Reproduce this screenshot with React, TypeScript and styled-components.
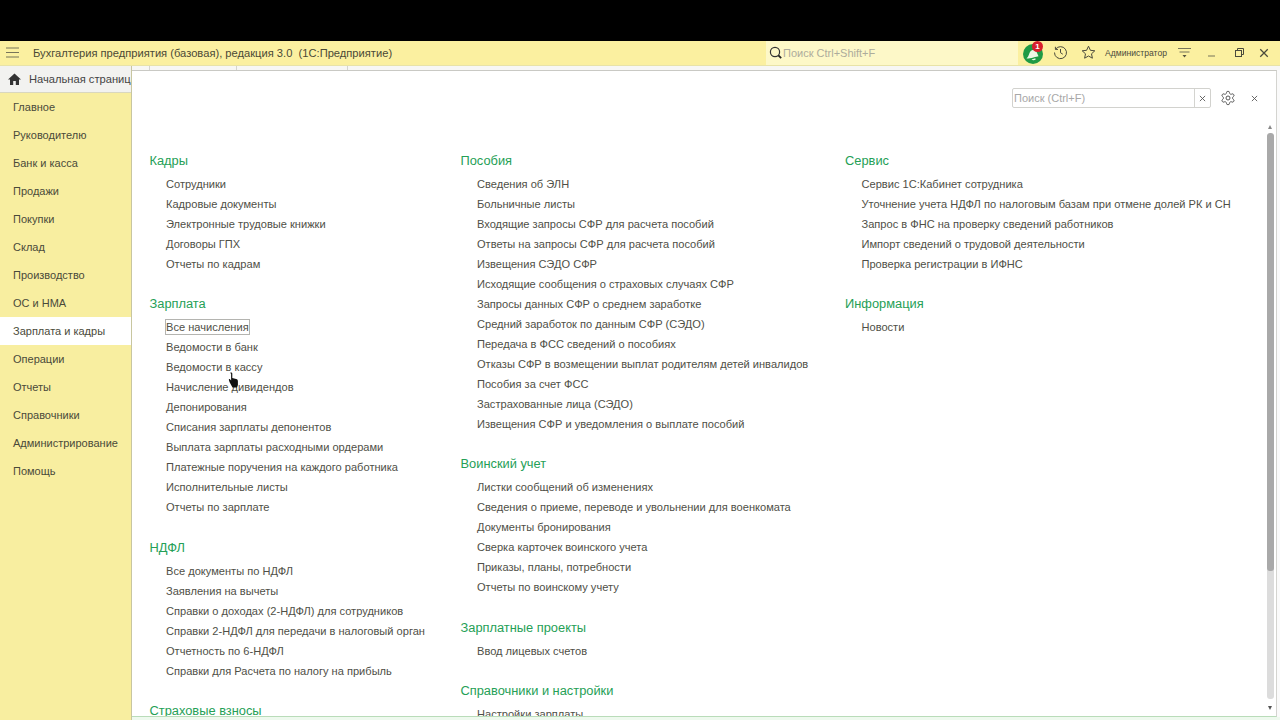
import React from "react";
import styled, { createGlobalStyle } from "styled-components";

const Global = createGlobalStyle`
  html, body { margin: 0; padding: 0; background: #000; }
  body { width: 1280px; height: 720px; overflow: hidden; font-family: "Liberation Sans", Arial, sans-serif; }
  * { box-sizing: border-box; }
`;
const Page = styled.div`width:1280px;height:720px;display:flex;flex-direction:column;overflow:hidden;background:#000;`;
const TopBlack = styled.div`height:41px;flex:none;background:#000;`;
const Header = styled.header`height:25px;flex:none;display:flex;align-items:center;background:#fbf0a0;padding-bottom:1px;border-bottom:1px solid #e8e3a8;`;
const Burger = styled.button`width:24px;height:24px;flex:none;margin-left:0;padding:0;border:0;background:none;display:flex;align-items:center;justify-content:center;`;
const AppTitle = styled.div`margin-left:9px;width:733px;flex:none;font-size:11.16px;color:#4a4936;white-space:pre;`;
const GlobalSearch = styled.div`width:252px;height:24px;flex:none;display:flex;align-items:center;background:#fdf8c8;font-size:11px;color:#adac9c;padding-left:2px;`;
const HeaderIcons = styled.div`flex:1;display:flex;align-items:center;height:100%;`;
const Slot = styled.div<{ $w: number }>`width:${p => p.$w}px;display:flex;align-items:center;justify-content:center;flex:none;color:#4a4a3c;`;
const UserName = styled.div`font-size:8.6px;color:#4a4a3c;width:72px;padding-left:1px;flex:none;white-space:nowrap;`;
const Badge = styled.span`position:absolute;left:14px;top:0px;width:11px;height:11px;border-radius:50%;background:#d81f2c;color:#fff;font-size:8px;font-weight:bold;line-height:11px;text-align:center;`;
const BellWrap = styled.div`position:relative;width:30px;height:24px;flex:none;display:flex;align-items:center;justify-content:center;padding-top:2px;`;
const Body = styled.div`flex:1;display:flex;min-height:0;background:#eef9ee;`;
const LeftCol = styled.div`width:132px;flex:none;display:flex;flex-direction:column;background:#f8eea0;border-right:1px solid #c8c6a0;`;
const HomeTab = styled.div`height:27px;flex:none;display:flex;align-items:center;background:#f2f2f0;border-bottom:1px solid #d9d7bf;font-size:11.16px;color:#444;overflow:hidden;white-space:nowrap;padding-left:8px;gap:8px;`;
const HomeIcon = styled.svg`flex:none;`;
const Nav = styled.nav`display:flex;flex-direction:column;flex:1;`;
const NavItem = styled.div<{ $active?: boolean }>`height:28px;flex:none;display:flex;align-items:center;padding-left:13px;font-size:11px;color:#4a4a3a;background:${p => (p.$active ? "#ffffff" : "transparent")};`;
const RightCol = styled.div`flex:1;display:flex;flex-direction:column;min-width:0;background:#fafafa;border-bottom:3px solid #eef9ee;`;
const TabStrip = styled.div`height:4px;flex:none;display:flex;background:#f7f7f5;`;
const TabStub = styled.div<{ $w: number }>`width:${p => p.$w}px;flex:none;border-right:1px solid #d4d4d0;`;
const Panel = styled.main`flex:1;margin-right:3px;min-height:0;background:#fff;border-top:1px solid #c9c9c4;border-right:1px solid #d4d4d0;border-bottom:1px solid #b9dcb9;position:relative;overflow:hidden;display:flex;flex-direction:column;`;
const PanelTools = styled.div`height:75px;flex:none;display:flex;justify-content:flex-end;align-items:flex-start;padding-top:17px;padding-right:18.5px;`;
const SearchBox = styled.div`width:199px;height:20px;flex:none;display:flex;border:1px solid #d2d2ce;border-radius:2px;background:#fff;font-size:11px;color:#a8a8a8;`;
const SearchInput = styled.div`flex:1;padding-left:1px;line-height:18px;`;
const SearchClear = styled.div`width:16px;border-left:1px solid #d4d4d0;display:flex;align-items:center;justify-content:center;`;
const ToolBtn = styled.div<{ $ml: number }>`margin-left:${p => p.$ml}px;height:20px;display:flex;align-items:center;justify-content:center;flex:none;`;
const Columns = styled.div`display:flex;flex:1;min-height:0;overflow:hidden;padding-left:17.5px;`;
const Col = styled.div<{ $w: number }>`width:${p => p.$w}px;flex:none;`;
const Section = styled.section`margin-bottom:15.3px;`;
const SecTitle = styled.div`height:28px;line-height:29px;font-size:12.85px;color:#25a056;white-space:nowrap;`;
const Item = styled.div`height:20px;display:flex;align-items:center;padding-left:16.5px;white-space:nowrap;font-size:11.08px;color:#4f4f47;`;
const ItemText = styled.span<{ $focus?: boolean }>`${p => (p.$focus ? "outline:1px solid #b4b4b0;outline-offset:0;padding:1px 0;" : "")}`;
const Track = styled.div`position:absolute;top:62px;right:2.5px;width:7px;height:566px;background:#dcdcdc;border-radius:3px;overflow:hidden;`;
const Thumb = styled.div`height:438px;background:#a9a9a9;border-radius:3px;`;
const ArrowUp = styled.div`position:absolute;top:54px;right:4px;width:0;height:0;border-left:2.5px solid transparent;border-right:2.5px solid transparent;border-bottom:4px solid #888;`;
const ArrowDown = styled.div`position:absolute;bottom:6px;right:4px;width:0;height:0;border-left:2.5px solid transparent;border-right:2.5px solid transparent;border-top:4px solid #555;`;
const Cursor = styled.svg`position:absolute;left:96px;top:301px;`;

const columns: { title: string; items: string[] }[][] = [
  [
    { title: "Кадры", items: ["Сотрудники", "Кадровые документы", "Электронные трудовые книжки", "Договоры ГПХ", "Отчеты по кадрам"] },
    { title: "Зарплата", items: ["Все начисления", "Ведомости в банк", "Ведомости в кассу", "Начисление дивидендов", "Депонирования", "Списания зарплаты депонентов", "Выплата зарплаты расходными ордерами", "Платежные поручения на каждого работника", "Исполнительные листы", "Отчеты по зарплате"] },
    { title: "НДФЛ", items: ["Все документы по НДФЛ", "Заявления на вычеты", "Справки о доходах (2-НДФЛ) для сотрудников", "Справки 2-НДФЛ для передачи в налоговый орган", "Отчетность по 6-НДФЛ", "Справки для Расчета по налогу на прибыль"] },
    { title: "Страховые взносы", items: [] },
  ],
  [
    { title: "Пособия", items: ["Сведения об ЭЛН", "Больничные листы", "Входящие запросы СФР для расчета пособий", "Ответы на запросы СФР для расчета пособий", "Извещения СЭДО СФР", "Исходящие сообщения о страховых случаях СФР", "Запросы данных СФР о среднем заработке", "Средний заработок по данным СФР (СЭДО)", "Передача в ФСС сведений о пособиях", "Отказы СФР в возмещении выплат родителям детей инвалидов", "Пособия за счет ФСС", "Застрахованные лица (СЭДО)", "Извещения СФР и уведомления о выплате пособий"] },
    { title: "Воинский учет", items: ["Листки сообщений об изменениях", "Сведения о приеме, переводе и увольнении для военкомата", "Документы бронирования", "Сверка карточек воинского учета", "Приказы, планы, потребности", "Отчеты по воинскому учету"] },
    { title: "Зарплатные проекты", items: ["Ввод лицевых счетов"] },
    { title: "Справочники и настройки", items: ["Настройки зарплаты"] },
  ],
  [
    { title: "Сервис", items: ["Сервис 1С:Кабинет сотрудника", "Уточнение учета НДФЛ по налоговым базам при отмене долей РК и СН", "Запрос в ФНС на проверку сведений работников", "Импорт сведений о трудовой деятельности", "Проверка регистрации в ИФНС"] },
    { title: "Информация", items: ["Новости"] },
  ],
];
const nav = ["Главное", "Руководителю", "Банк и касса", "Продажи", "Покупки", "Склад", "Производство", "ОС и НМА", "Зарплата и кадры", "Операции", "Отчеты", "Справочники", "Администрирование", "Помощь"];
const widths = [311, 384.5, 400];

const X = ({ s = 8, c = "#555", w = 1 }: { s?: number; c?: string; w?: number }) => (
  <svg width={s} height={s} viewBox="0 0 8 8"><path d="M1 1l6 6M7 1L1 7" stroke={c} strokeWidth={w} fill="none" /></svg>
);

export default function App() {
  return (
    <Page>
      <Global />
      <TopBlack />
      <Header>
        <Burger aria-label="menu">
          <svg width="13" height="11" viewBox="0 0 13 11"><path d="M0 1h13M0 5.500h13M0 10h13" stroke="#77745a" strokeWidth="1.2" /></svg>
        </Burger>
        <AppTitle>Бухгалтерия предприятия (базовая), редакция 3.0  (1С:Предприятие)</AppTitle>
        <GlobalSearch>
          <svg width="15" height="15" viewBox="0 0 15 15"><circle cx="7" cy="7" r="4.6" stroke="#333" strokeWidth="1.2" fill="none" /><path d="M10.400 10.400l2.800 2.800" stroke="#222" strokeWidth="1.8" /></svg>
          Поиск Ctrl+Shift+F
        </GlobalSearch>
        <HeaderIcons>
          <BellWrap>
            <svg width="20" height="20" viewBox="0 0 20 20"><circle cx="10" cy="10" r="10" fill="#1f9a45" /><path d="M3.500 14.500C6 12.500 6 9 7.500 7.200 9 5.600 11.500 5.500 13 6.800l2.500 5.400C13.500 12.500 8 14.500 3.500 14.500zM8.500 15.500l3.800-1.300.4 1.200c-1 .9-3.200 1.100-4.200.1z" fill="#eef7e6" /></svg>
            <Badge>1</Badge>
          </BellWrap>
          <Slot $w={24}>
            <svg width="15" height="15" viewBox="0 0 15 15" fill="none" stroke="#4a4a3c" strokeWidth="1"><path d="M2.600 4.200A6 6 0 1 1 1.500 7.500" /><path d="M2.400 1.800v2.600H5" /><path d="M7.500 4v3.700l2.300 1.500" /></svg>
          </Slot>
          <Slot $w={32}>
            <svg width="15" height="15" viewBox="0 0 15 15"><path d="M7.500 1.200l1.900 4.100 4.400.5-3.300 3 .9 4.400-3.900-2.200-3.900 2.200.9-4.400-3.300-3 4.400-.5z" fill="none" stroke="#4a4a3c" strokeWidth="1" /></svg>
          </Slot>
          <UserName>Администратор</UserName>
          <Slot $w={16}>
            <svg width="13" height="13" viewBox="0 0 13 13"><path d="M0 2.500h13M1.500 6h10" stroke="#77755a" strokeWidth="1" /><path d="M4.500 9h4l-2 2.600z" fill="#55533f" /></svg>
          </Slot>
          <Slot $w={38}>
            <svg width="9" height="9" viewBox="0 0 9 9"><path d="M1 8h7" stroke="#77755a" strokeWidth="1" /></svg>
          </Slot>
          <Slot $w={18}>
            <svg width="9" height="9" viewBox="0 0 9 9" fill="none" stroke="#4a4a3c"><rect x="0.500" y="2.500" width="6" height="6" /><path d="M2.500 2.500v-2h6v6h-2" /></svg>
          </Slot>
          <Slot $w={32}><X s={10} c="#4a4a3c" /></Slot>
        </HeaderIcons>
      </Header>
      <Body>
        <LeftCol>
          <HomeTab>
            <HomeIcon width="13" height="12" viewBox="0 0 13 12"><path d="M6.500 0.500L0 6.500h2V12h3.200V8h2.600v4H11V6.500h2z" fill="#333" /></HomeIcon>
            Начальная страница
          </HomeTab>
          <Nav>
            {nav.map(n => <NavItem key={n} $active={n === "Зарплата и кадры"}>{n}</NavItem>)}
          </Nav>
        </LeftCol>
        <RightCol>
          <TabStrip><TabStub $w={18} /><TabStub $w={87} /><TabStub $w={111} /></TabStrip>
          <Panel>
            <PanelTools>
              <SearchBox>
                <SearchInput>Поиск (Ctrl+F)</SearchInput>
                <SearchClear><X s={7} /></SearchClear>
              </SearchBox>
              <ToolBtn $ml={9}>
                <svg width="16" height="16" viewBox="0 0 24 24" fill="none" stroke="#555" strokeWidth="1.5"><path d="M12.220 2h-.44a2 2 0 0 0-2 2v.18a2 2 0 0 1-1 1.730l-.43.25a2 2 0 0 1-2 0l-.15-.08a2 2 0 0 0-2.730.73l-.22.38a2 2 0 0 0 .73 2.730l.15.1a2 2 0 0 1 1 1.720v.51a2 2 0 0 1-1 1.740l-.15.09a2 2 0 0 0-.73 2.730l.22.38a2 2 0 0 0 2.730.73l.15-.08a2 2 0 0 1 2 0l.43.25a2 2 0 0 1 1 1.730V20a2 2 0 0 0 2 2h.44a2 2 0 0 0 2-2v-.18a2 2 0 0 1 1-1.730l.43-.25a2 2 0 0 1 2 0l.15.08a2 2 0 0 0 2.730-.73l.22-.39a2 2 0 0 0-.73-2.730l-.15-.08a2 2 0 0 1-1-1.740v-.5a2 2 0 0 1 1-1.740l.15-.09a2 2 0 0 0 .73-2.730l-.22-.38a2 2 0 0 0-2.730-.73l-.15.08a2 2 0 0 1-2 0l-.43-.25a2 2 0 0 1-1-1.730V4a2 2 0 0 0-2-2z" /><circle cx="12" cy="12" r="3" /></svg>
              </ToolBtn>
              <ToolBtn $ml={14.5}><X s={7} /></ToolBtn>
            </PanelTools>
            <Columns>
              {columns.map((sections, i) => (
                <Col key={i} $w={widths[i]}>
                  {sections.map(s => (
                    <Section key={s.title}>
                      <SecTitle>{s.title}</SecTitle>
                      {s.items.map(it => (
                        <Item key={it}><ItemText $focus={it === "Все начисления"}>{it}</ItemText></Item>
                      ))}
                    </Section>
                  ))}
                </Col>
              ))}
            </Columns>
            <ArrowUp />
            <Track><Thumb /></Track>
            <ArrowDown />
            <Cursor width="11" height="16" viewBox="0 0 11 16"><path d="M3 0.500c1 0 1.300.6 1.300 1.300V6l3.800 1c1.300.4 1.800 1 1.800 2.200V13l-1 2.500H4.500L1.500 10 .8 7.800c0-.8.9-1 1.400-.4l.9 1.100V1.800C1.900 1.100 2.200.5 3 .5z" fill="#111" /></Cursor>
          </Panel>
        </RightCol>
      </Body>
    </Page>
  );
}
